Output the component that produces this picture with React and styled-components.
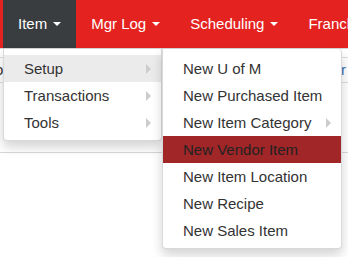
import React from "react";
import styled, { createGlobalStyle } from "styled-components";

const Global = createGlobalStyle`
  html, body { margin: 0; padding: 0; background: #fff; }
  body {
    font-family: "Liberation Sans", Arial, sans-serif;
    font-size: 15px;
    overflow: hidden;
  }
`;

const Page = styled.div`
  position: relative;
  width: 348px;
  height: 257px;
  overflow: hidden;
`;

const Navbar = styled.nav`
  display: flex;
  height: 48px;
  padding-left: 3px;
  background: #e42321;
  border-bottom: 1px solid #d6d6d6;
  white-space: nowrap;
`;

const NavItem = styled.div`
  display: flex;
  align-items: center;
  flex-shrink: 0;
  padding: 0 15px;
  line-height: 20px;
  color: #fff;
  background: ${(p) => (p.$active ? "#3a3d40" : "transparent")};
`;

const Caret = styled.span`
  display: inline-block;
  width: 0;
  height: 0;
  margin-left: 6px;
  border-top: 4px solid currentColor;
  border-left: 4px solid transparent;
  border-right: 4px solid transparent;
`;

const Content = styled.div`
  padding-top: 8px;
`;

const TableRow = styled.div`
  display: flex;
  justify-content: space-between;
  height: 24px;
  line-height: 24px;
  border-top: 1px solid #dddddd;
  border-bottom: 1px solid #dddddd;
  color: #333;
`;

const Cell = styled.span`
  color: ${(p) => (p.$link ? "#3a6fb0" : "#333")};
  padding-right: ${(p) => (p.$link ? "2px" : "0")};
  margin-left: ${(p) => (p.$lead ? "-5px" : "0")};
`;

const Section = styled.div`
  height: 69px;
  border-bottom: 1px solid #d9d9d9;
`;

const Menu = styled.ul`
  position: absolute;
  top: 49px;
  left: ${(p) => p.$left}px;
  width: ${(p) => p.$width}px;
  box-sizing: border-box;
  margin: 0;
  padding: 6px 0 4px;
  list-style: none;
  background: #fff;
  border: 1px solid rgba(0, 0, 0, 0.15);
  border-top: 0;
  border-radius: ${(p) => (p.$sub ? "0 4px 4px 4px" : "0 0 4px 4px")};
  box-shadow: 0 6px 12px rgba(0, 0, 0, 0.175);
  z-index: ${(p) => (p.$sub ? 3 : 2)};
`;

const bgFor = (state) =>
  state === "open" ? "#ebebeb" : state === "hover" ? "#a02628" : "transparent";

const MenuItem = styled.li`
  display: flex;
  align-items: center;
  justify-content: space-between;
  padding: 3px 20px;
  line-height: 21px;
  white-space: nowrap;
  color: ${(p) => (p.$state === "hover" ? "#222" : "#333")};
  background: ${(p) => bgFor(p.$state)};
`;

const SubArrow = styled.span`
  width: 0;
  height: 0;
  margin-right: -10px;
  border-left: 5px solid #cccccc;
  border-top: 5px solid transparent;
  border-bottom: 5px solid transparent;
`;

const navItems = [
  { label: "Item", active: true },
  { label: "Mgr Log" },
  { label: "Scheduling" },
  { label: "Franchise" },
];

const mainMenu = [
  { label: "Setup", sub: true, state: "open" },
  { label: "Transactions", sub: true },
  { label: "Tools", sub: true },
];

const setupMenu = [
  { label: "New U of M" },
  { label: "New Purchased Item" },
  { label: "New Item Category", sub: true },
  { label: "New Vendor Item", state: "hover" },
  { label: "New Item Location" },
  { label: "New Recipe" },
  { label: "New Sales Item" },
];

function DropMenu({ items, ...rest }) {
  return (
    <Menu {...rest}>
      {items.map((it) => (
        <MenuItem key={it.label} $state={it.state}>
          <span>{it.label}</span>
          {it.sub && <SubArrow />}
        </MenuItem>
      ))}
    </Menu>
  );
}

export default function App() {
  return (
    <Page>
      <Global />
      <Navbar>
        {navItems.map((n) => (
          <NavItem key={n.label} $active={n.active}>
            {n.label}
            {n.label !== "Franchise" && <Caret />}
          </NavItem>
        ))}
      </Navbar>
      <Content>
        <TableRow>
          <Cell $lead>o</Cell>
          <Cell $link>Vendor</Cell>
        </TableRow>
        <Section />
      </Content>
      <DropMenu items={mainMenu} $left={3} $width={159} />
      <DropMenu items={setupMenu} $left={162} $width={180} $sub />
    </Page>
  );
}
